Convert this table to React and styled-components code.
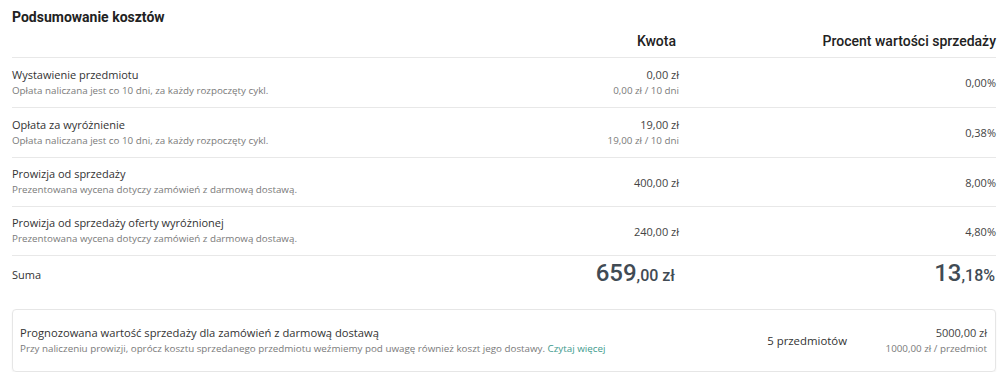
import React from "react";
import styled, { createGlobalStyle } from "styled-components";

const Global = createGlobalStyle`
  html, body { margin: 0; padding: 0; background: #fff; }
  body { font-family: "Open Sans", "Liberation Sans", sans-serif; color: #333; }
`;

const Page = styled.div`
  width: 1008px;
  padding: 7px 12px 0 12px;
  box-sizing: border-box;
`;

const Title = styled.h2`
  margin: 0;
  font-family: Roboto, "Liberation Sans", sans-serif;
  font-weight: 700;
  font-size: 14px;
  line-height: 20px;
  color: #222;
`;

const Table = styled.div`
  width: 984px;
`;

const Row = styled.div`
  display: grid;
  grid-template-columns: 1fr 200px 317px;
  align-items: center;
  border-bottom: ${(p) => (p.$last ? "none" : "1px solid #e8e8e8")};
  padding: ${(p) => p.$pad || "8px 0"};
`;

const HeadCell = styled.div`
  font-family: Roboto, "Liberation Sans", sans-serif;
  font-weight: 500;
  font-size: 14px;
  line-height: 18px;
  color: #222;
  text-align: right;
  padding-right: ${(p) => p.$pr || "0"};
`;

const Label = styled.div`
  display: flex;
  flex-direction: column;
`;

const Name = styled.div`
  font-size: 11px;
  line-height: 16px;
  color: #333;
`;

const Note = styled.div`
  font-size: 9.8px;
  line-height: 16px;
  color: #7a7a7a;
  white-space: nowrap;
`;

const Amount = styled.div`
  text-align: right;
  display: flex;
  flex-direction: column;
  align-items: flex-end;
`;

const Main = styled.div`
  font-size: 11px;
  line-height: 17px;
  color: #444;
`;

const Sub = styled.div`
  font-size: 9.8px;
  line-height: 16px;
  color: #7a7a7a;
`;

const Big = styled.div`
  font-family: Roboto, "Liberation Sans", sans-serif;
  font-weight: 500;
  font-size: 24px;
  line-height: 32px;
  color: #414b54;
  text-align: right;
  padding-right: ${(p) => p.$pr || "0"};
`;

const Small = styled.span`
  font-size: 16px;
`;

const Box = styled.div`
  margin-top: 17px;
  height: 63px;
  box-sizing: border-box;
  border: 1px solid #e6e6e6;
  border-radius: 4px;
  box-shadow: 0 1px 2px rgba(0, 0, 0, 0.06);
  display: grid;
  grid-template-columns: 1fr auto 140px;
  align-items: center;
  padding: 0 8px 0 7px;
`;

const BoxName = styled(Name)`
  font-size: 11.2px;
  line-height: 17px;
`;

const Count = styled.div`
  font-size: 11.4px;
  color: #333;
`;

const Link = styled.a`
  color: #3e9b8e;
  text-decoration: none;
`;

const rows = [
  {
    name: "Wystawienie przedmiotu",
    note: "Opłata naliczana jest co 10 dni, za każdy rozpoczęty cykl.",
    amount: "0,00 zł",
    sub: "0,00 zł / 10 dni",
    pct: "0,00%",
  },
  {
    name: "Opłata za wyróżnienie",
    note: "Opłata naliczana jest co 10 dni, za każdy rozpoczęty cykl.",
    amount: "19,00 zł",
    sub: "19,00 zł / 10 dni",
    pct: "0,38%",
  },
  {
    name: "Prowizja od sprzedaży",
    note: "Prezentowana wycena dotyczy zamówień z darmową dostawą.",
    amount: "400,00 zł",
    pct: "8,00%",
  },
  {
    name: "Prowizja od sprzedaży oferty wyróżnionej",
    note: "Prezentowana wycena dotyczy zamówień z darmową dostawą.",
    amount: "240,00 zł",
    pct: "4,80%",
  },
];

export default function App() {
  return (
    <Page>
      <Global />
      <Title>Podsumowanie kosztów</Title>
      <Table>
        <Row $pad="5px 0 7px 0">
          <div />
          <HeadCell $pr="3px">Kwota</HeadCell>
          <HeadCell>Procent wartości sprzedaży</HeadCell>
        </Row>
        {rows.map((r) => (
          <Row key={r.name}>
            <Label>
              <Name>{r.name}</Name>
              <Note>{r.note}</Note>
            </Label>
            <Amount>
              <Main>{r.amount}</Main>
              {r.sub && <Sub>{r.sub}</Sub>}
            </Amount>
            <Amount>
              <Main>{r.pct}</Main>
            </Amount>
          </Row>
        ))}
        <Row $last $pad="1px 0 0 0">
          <Name>Suma</Name>
          <Big $pr="4px">
            659<Small>,00 zł</Small>
          </Big>
          <Big $pr="1px">
            13<Small>,18%</Small>
          </Big>
        </Row>
      </Table>
      <Box>
        <Label>
          <BoxName>Prognozowana wartość sprzedaży dla zamówień z darmową dostawą</BoxName>
          <Note>
            Przy naliczeniu prowizji, oprócz kosztu sprzedanego przedmiotu weźmiemy pod uwagę również koszt jego dostawy.{" "}
            <Link href="#">Czytaj więcej</Link>
          </Note>
        </Label>
        <Count>5 przedmiotów</Count>
        <Amount>
          <Main>5000,00 zł</Main>
          <Sub>1000,00 zł / przedmiot</Sub>
        </Amount>
      </Box>
    </Page>
  );
}
